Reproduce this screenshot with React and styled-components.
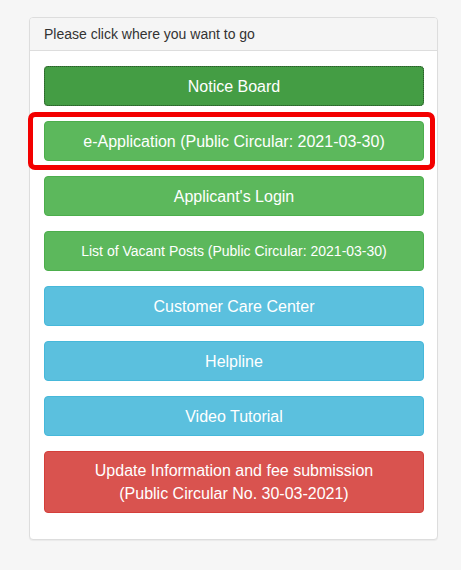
import styled, { createGlobalStyle } from "styled-components";

const GlobalStyle = createGlobalStyle`
  body {
    margin: 0;
    background: #f6f6f6;
    font-family: "Liberation Sans", Arial, sans-serif;
  }
`;

const Page = styled.div`
  padding: 17px 23px 30px 29px;
`;

const Panel = styled.div`
  background: #fff;
  border: 1px solid #dddddd;
  border-radius: 4px;
  box-shadow: 0 1px 1px rgba(0, 0, 0, 0.05);
`;

const PanelHeading = styled.div`
  background: #f5f5f5;
  border-bottom: 1px solid #dddddd;
  border-radius: 3px 3px 0 0;
  padding: 8px 14px 8px;
  font-size: 14px;
  line-height: 16px;
  color: #333;
`;

const PanelBody = styled.div`
  display: flex;
  flex-direction: column;
  gap: 15px;
  padding: 15px 13px 26px 14px;
`;

const palette = {
  success: { bg: "#5cb85c", border: "#4cae4c" },
  active: { bg: "#449d44", border: "#398439" },
  info: { bg: "#5bc0de", border: "#46b8da" },
  danger: { bg: "#d9534f", border: "#d43f3a" },
};

const Button = styled.a`
  display: flex;
  align-items: center;
  justify-content: center;
  box-sizing: border-box;
  min-height: 40px;
  padding: 7px 12px;
  border-radius: 4px;
  border: 1px solid ${(p) => palette[p.$variant].border};
  background: ${(p) => palette[p.$variant].bg};
  color: #fff;
  font-size: ${(p) => (p.$small ? "14px" : "16px")};
  line-height: 23px;
  text-align: center;
  text-decoration: none;
  cursor: pointer;
  outline: ${(p) => (p.$focused ? "1px dotted #2a5f2a" : "none")};
  outline-offset: -1px;
`;

const Highlight = styled.div`
  position: relative;

  &::after {
    content: "";
    position: absolute;
    top: -9px;
    bottom: -9px;
    left: -16px;
    right: -11px;
    border: 5px solid #f30000;
    border-radius: 7px;
    pointer-events: none;
  }
`;

export default function App() {
  return (
    <>
      <GlobalStyle />
      <Page>
        <Panel>
          <PanelHeading>Please click where you want to go</PanelHeading>
          <PanelBody>
            <Button $variant="active" $focused>
              Notice Board
            </Button>
            <Highlight>
              <Button $variant="success">
                e-Application (Public Circular: 2021-03-30)
              </Button>
            </Highlight>
            <Button $variant="success">Applicant's Login</Button>
            <Button $variant="success" $small>
              List of Vacant Posts (Public Circular: 2021-03-30)
            </Button>
            <Button $variant="info">Customer Care Center</Button>
            <Button $variant="info">Helpline</Button>
            <Button $variant="info">Video Tutorial</Button>
            <Button $variant="danger">
              Update Information and fee submission
              <br />
              (Public Circular No. 30-03-2021)
            </Button>
          </PanelBody>
        </Panel>
      </Page>
    </>
  );
}
